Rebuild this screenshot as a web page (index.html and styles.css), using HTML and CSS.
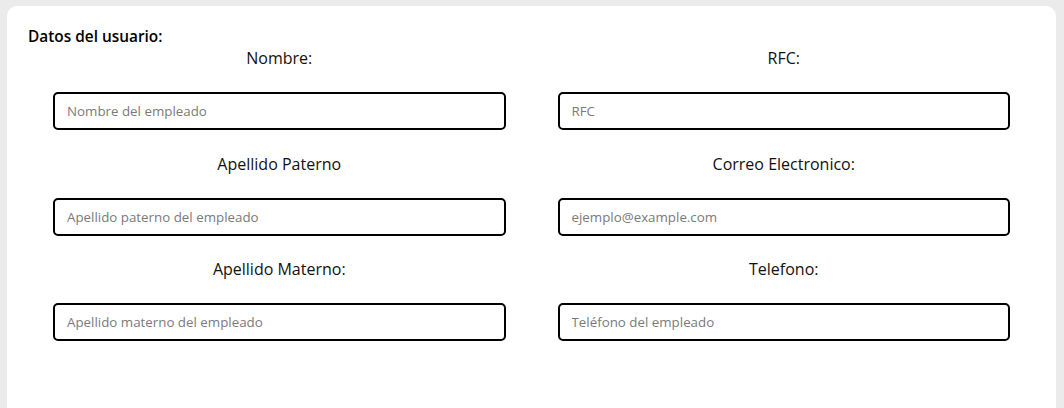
FILE: index.html
```html
<!DOCTYPE html>
<html lang="es">
<head>
<meta charset="utf-8">
<title>Datos del usuario</title>
<link rel="stylesheet" href="styles.css">
</head>
<body>
<div class="card">
  <h3 class="title">Datos del usuario:</h3>
  <div class="grid">
    <div class="field">
      <label class="label">Nombre:</label>
      <input class="input" type="text" placeholder="Nombre del empleado">
    </div>
    <div class="field">
      <label class="label">RFC:</label>
      <input class="input" type="text" placeholder="RFC">
    </div>
    <div class="field">
      <label class="label">Apellido Paterno</label>
      <input class="input" type="text" placeholder="Apellido paterno del empleado">
    </div>
    <div class="field">
      <label class="label">Correo Electronico:</label>
      <input class="input" type="email" placeholder="ejemplo@example.com">
    </div>
    <div class="field">
      <label class="label">Apellido Materno:</label>
      <input class="input" type="text" placeholder="Apellido materno del empleado">
    </div>
    <div class="field">
      <label class="label">Telefono:</label>
      <input class="input" type="tel" placeholder="Teléfono del empleado">
    </div>
  </div>
</div>
</body>
</html>
```
FILE: styles.css
```css
* { box-sizing: border-box; }
html, body { margin: 0; padding: 0; }
body {
  background: #ebebeb;
  font-family: "Open Sans", "Noto Sans", sans-serif;
  color: #212529;
  padding: 6px 8px 0 7px;
  height: 408px;
  overflow: hidden;
}
.card {
  background: #ffffff;
  border-radius: 10px;
  padding: 21px 21px 0 21px;
  height: 420px;
}
.title {
  margin: 0;
  font-size: 15.4px;
  font-weight: 600;
  line-height: 19px;
  color: #000;
}
.grid {
  display: grid;
  grid-template-columns: 1fr 1fr;
  column-gap: 52px;
  row-gap: 21.5px;
  padding: 0 25px;
}
.field {
  display: flex;
  flex-direction: column;
}
.label {
  display: block;
  text-align: center;
  font-size: 16px;
  line-height: 24px;
  margin-bottom: 22px;
  color: #111;
}
.input {
  display: block;
  width: 100%;
  height: 38px;
  border: 2px solid #000;
  border-radius: 5px;
  padding: 0 12px;
  font-family: "Open Sans", "Noto Sans", sans-serif;
  font-size: 13.33px;
  color: #333;
  background: #fff;
  outline: none;
}
.input::placeholder { color: #7a7a7a; }
```
